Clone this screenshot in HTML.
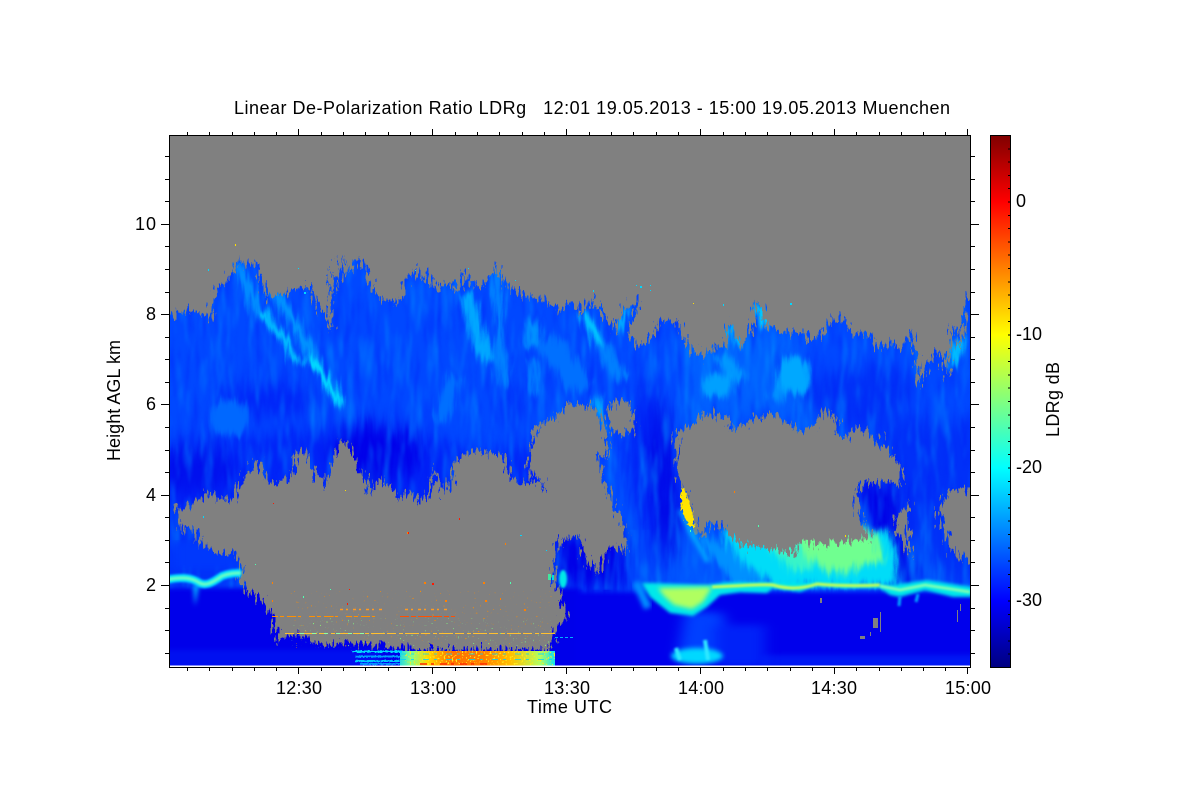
<!DOCTYPE html>
<html><head><meta charset="utf-8"><title>LDRg</title>
<style>
html,body{margin:0;padding:0;background:#fff;width:1200px;height:800px;overflow:hidden}
svg{display:block}
text{font-family:"Liberation Sans",sans-serif;font-size:18px;fill:#000}
</style></head><body>
<svg width="1200" height="800" viewBox="0 0 1200 800" xmlns="http://www.w3.org/2000/svg">
<defs>
<clipPath id="plot"><rect x="170" y="136" width="800" height="530"/></clipPath>
<filter id="tex" filterUnits="userSpaceOnUse" x="100" y="100" width="950" height="620" color-interpolation-filters="sRGB">
  <feGaussianBlur in="SourceGraphic" stdDeviation="9" result="b"/>
  <feTurbulence type="fractalNoise" baseFrequency="0.14 0.02" numOctaves="3" seed="4" result="n"/>
  <feDisplacementMap in="b" in2="n" scale="22" xChannelSelector="R" yChannelSelector="G"/>
</filter>
<filter id="tex2" filterUnits="userSpaceOnUse" x="100" y="100" width="950" height="620" color-interpolation-filters="sRGB">
  <feGaussianBlur in="SourceGraphic" stdDeviation="3" result="b"/>
  <feTurbulence type="fractalNoise" baseFrequency="0.16 0.025" numOctaves="3" seed="8" result="n"/>
  <feDisplacementMap in="b" in2="n" scale="16" xChannelSelector="R" yChannelSelector="G"/>
</filter>
<filter id="tex3" filterUnits="userSpaceOnUse" x="650" y="500" width="300" height="110" color-interpolation-filters="sRGB">
  <feGaussianBlur in="SourceGraphic" stdDeviation="3.5" result="b"/>
  <feTurbulence type="fractalNoise" baseFrequency="0.16 0.03" numOctaves="3" seed="14" result="n"/>
  <feDisplacementMap in="b" in2="n" scale="14" xChannelSelector="R" yChannelSelector="G"/>
</filter>
<filter id="jag" filterUnits="userSpaceOnUse" x="100" y="100" width="950" height="620" color-interpolation-filters="sRGB">
  <feTurbulence type="fractalNoise" baseFrequency="0.38 0.08" numOctaves="3" seed="7" result="n"/>
  <feDisplacementMap in="SourceGraphic" in2="n" scale="24" xChannelSelector="R" yChannelSelector="G"/>
</filter>
<filter id="jag2" filterUnits="userSpaceOnUse" x="600" y="440" width="200" height="140" color-interpolation-filters="sRGB">
  <feTurbulence type="fractalNoise" baseFrequency="0.4 0.2" numOctaves="2" seed="2" result="n"/>
  <feDisplacementMap in="SourceGraphic" in2="n" scale="6" xChannelSelector="R" yChannelSelector="G"/>
</filter>
<filter id="lite" filterUnits="userSpaceOnUse" x="170" y="240" width="800" height="350" color-interpolation-filters="sRGB">
  <feTurbulence type="fractalNoise" baseFrequency="0.13 0.018" numOctaves="3" seed="11"/>
  <feColorMatrix type="matrix" values="0 0 0 0 0  0 0 0 0 0.55  0 0 0 0 1  1.5 0 0 0 -0.72"/>
  <feGaussianBlur stdDeviation="1"/>
</filter>
<filter id="dark" filterUnits="userSpaceOnUse" x="170" y="240" width="800" height="290" color-interpolation-filters="sRGB">
  <feTurbulence type="fractalNoise" baseFrequency="0.16 0.02" numOctaves="3" seed="23"/>
  <feColorMatrix type="matrix" values="0 0 0 0 0  0 0 0 0 0.12  0 0 0 0 0.97  1.3 0 0 0 -0.66"/>
  <feGaussianBlur stdDeviation="1"/>
</filter>
<filter id="sc1" filterUnits="userSpaceOnUse" x="290" y="590" width="262" height="58" color-interpolation-filters="sRGB">
  <feTurbulence type="fractalNoise" baseFrequency="0.55" numOctaves="1" seed="5"/>
  <feColorMatrix type="matrix" values="0 0 0 0 1  0 0 0 0 0.55  0 0 0 0 0  14 0 0 0 -9.95"/>
</filter>
<filter id="sc2" filterUnits="userSpaceOnUse" x="290" y="618" width="262" height="30" color-interpolation-filters="sRGB">
  <feTurbulence type="fractalNoise" baseFrequency="0.6" numOctaves="1" seed="31"/>
  <feColorMatrix type="matrix" values="0 0 0 0 0.5  0 0 0 0 1  0 0 0 0 0.5  14 0 0 0 -9.95"/>
</filter>
<filter id="sc3" filterUnits="userSpaceOnUse" x="405" y="651" width="150" height="14" color-interpolation-filters="sRGB">
  <feTurbulence type="fractalNoise" baseFrequency="0.5 0.6" numOctaves="1" seed="9"/>
  <feColorMatrix type="matrix" values="0 0 0 0 1  0 0 0 0 0.92  0 0 0 0 0.1  10 0 0 0 -5.8"/>
</filter>
<filter id="b1" x="-20%" y="-100%" width="140%" height="300%" color-interpolation-filters="sRGB"><feGaussianBlur stdDeviation="1"/></filter>
<filter id="b15" filterUnits="userSpaceOnUse" x="620" y="560" width="370" height="80" color-interpolation-filters="sRGB"><feGaussianBlur stdDeviation="1.6"/></filter>
<filter id="b2" x="-30%" y="-30%" width="160%" height="160%" color-interpolation-filters="sRGB"><feGaussianBlur stdDeviation="2.5"/></filter>
<filter id="b6" filterUnits="userSpaceOnUse" x="100" y="540" width="950" height="180" color-interpolation-filters="sRGB">
  <feGaussianBlur stdDeviation="7 4"/>
</filter>
<filter id="hotn" filterUnits="userSpaceOnUse" x="340" y="640" width="240" height="30" color-interpolation-filters="sRGB">
  <feTurbulence type="fractalNoise" baseFrequency="0.6 0.5" numOctaves="1" seed="3" result="n"/>
  <feDisplacementMap in="SourceGraphic" in2="n" scale="3" xChannelSelector="R" yChannelSelector="G"/>
</filter>
<linearGradient id="jet" x1="0" y1="0" x2="0" y2="1">
  <stop offset="0" stop-color="#800000"/><stop offset=".125" stop-color="#ff0000"/>
  <stop offset=".375" stop-color="#ffff00"/><stop offset=".5" stop-color="#80ff80"/>
  <stop offset=".625" stop-color="#00ffff"/><stop offset=".875" stop-color="#0000ff"/>
  <stop offset="1" stop-color="#000080"/>
</linearGradient>
<linearGradient id="hot" gradientUnits="userSpaceOnUse" x1="395" y1="0" x2="556" y2="0">
  <stop offset="0" stop-color="#00c8ff"/><stop offset=".1" stop-color="#80ff90"/>
  <stop offset=".2" stop-color="#ffdc00"/><stop offset=".35" stop-color="#ff7000"/>
  <stop offset=".55" stop-color="#ff8000"/><stop offset=".72" stop-color="#ffc000"/>
  <stop offset=".9" stop-color="#b0ff60"/><stop offset="1" stop-color="#00e0ff"/>
</linearGradient>
</defs>

<rect x="170" y="135" width="800" height="532" fill="#0046ff"/>
<g clip-path="url(#plot)">
  <g filter="url(#tex)">
    <rect x="130" y="220" width="880" height="480" fill="#0048ff"/>
    <!-- darker lower cloud -->
    <path d="M150 450 L300 430 L340 425 L420 435 L480 455 L560 440 L560 520 L150 540Z" fill="#0024f8"/>
    <ellipse cx="375" cy="455" rx="45" ry="32" fill="#0000ea"/>
    <ellipse cx="270" cy="400" rx="50" ry="14" fill="#0024f8"/>
    <ellipse cx="195" cy="470" rx="40" ry="25" fill="#0010ee"/>
    <ellipse cx="515" cy="405" rx="10" ry="22" fill="#0030fa"/>
    <rect x="150" y="510" width="130" height="80" fill="#0030f8"/>
    <rect x="555" y="530" width="70" height="60" fill="#0000e8"/>
    <!-- 14:00 column -->
    <path d="M640 590 L625 430 L650 370 L672 430 L680 500 L720 590Z" fill="#0024f6"/>
    <path d="M652 450 L660 395 L672 450 L686 560 L665 560Z" fill="#0000e4"/>
    <path d="M606 470 L630 500 L660 580 L635 585 L620 530Z" fill="#0054ff"/>
    <path d="M680 520 L735 590 L660 590Z" fill="#0058ff"/>
    <!-- right part -->
    <rect x="880" y="420" width="110" height="165" fill="#0030f8"/>
    <path d="M855 485 L895 480 L898 540 L912 585 L880 585Z" fill="#0000e6"/>
    <path d="M905 530 L915 540 L945 585 L925 585Z" fill="#0070ff"/>
    <path d="M800 380 L870 365 L915 375 L912 400 L860 440 L800 400Z" fill="#0030f8"/>
    <rect x="680" y="330" width="120" height="90" fill="#0060ff"/>
  </g>
  <rect x="170" y="240" width="800" height="350" filter="url(#lite)"/>
  <rect x="170" y="240" width="800" height="290" filter="url(#dark)"/>
  <!-- bright streaks on top of texture -->
  <g filter="url(#tex2)" fill="none">
    <path d="M237 263 L263 320" stroke="#0090ff" stroke-width="10"/>
    <path d="M270 290 L300 330 L320 370" stroke="#0098ff" stroke-width="9"/>
    <path d="M262 312 L287 343 L298 365" stroke="#00d0ff" stroke-width="7"/>
    <path d="M307 358 L327 377 L341 405" stroke="#00e8ff" stroke-width="8"/>
    <path d="M466 295 L480 340 L490 362" stroke="#00a8ff" stroke-width="13"/>
    <path d="M497 265 L500 340 L505 385" stroke="#0088ff" stroke-width="8"/>
    <path d="M455 375 L440 420" stroke="#0070ff" stroke-width="13"/>
    <path d="M533 320 L533 345" stroke="#0090ff" stroke-width="14"/>
    <path d="M533 360 L535 395" stroke="#0080ff" stroke-width="8"/>
    <path d="M545 340 L585 390" stroke="#0070ff" stroke-width="24"/>
    <path d="M583 312 L600 345" stroke="#00c8ff" stroke-width="10"/>
    <path d="M600 345 L622 380" stroke="#0080ff" stroke-width="12"/>
    <path d="M626 308 L620 332" stroke="#00c8ff" stroke-width="6"/>
    <path d="M596 398 L603 432" stroke="#00b8ff" stroke-width="7"/>
    <path d="M731 325 L736 346" stroke="#00d0ff" stroke-width="7"/>
    <path d="M757 305 L766 327" stroke="#00e0ff" stroke-width="8"/>
    <path d="M720 355 L740 378" stroke="#0098ff" stroke-width="13"/>
    <path d="M775 400 L790 370" stroke="#0090ff" stroke-width="14"/>
    <path d="M960 338 L952 368" stroke="#00d8ff" stroke-width="7"/>
    <ellipse cx="230" cy="418" rx="20" ry="18" fill="#0068ff"/>
    <ellipse cx="718" cy="385" rx="17" ry="12" fill="#00a0ff"/>
    <ellipse cx="795" cy="375" rx="15" ry="20" fill="#00a8ff"/>
  </g>
  <!-- cyan / green area -->
  <g filter="url(#tex3)">
    <path d="M692 530 L730 545 L772 584 L735 586Z" fill="#0090ff"/>
    <path d="M720 530 L890 530 L900 586 L778 586 L745 565Z" fill="#00dcf8"/>
    <path d="M760 538 L802 538 L815 570 L790 570Z" fill="#38f4c8"/>
    <path d="M796 532 L874 532 L884 560 L835 574 L806 558Z" fill="#70ff90"/>
  </g>
  <!-- boundary layer -->
  <g filter="url(#b2)">
    <rect x="160" y="588" width="420" height="90" fill="#0000ea"/>
    <rect x="575" y="592" width="400" height="90" fill="#0000ec"/>
    <rect x="160" y="650" width="220" height="20" fill="#0010f0"/>
    <rect x="760" y="655" width="215" height="14" fill="#0018f4"/>
    <path d="M193 585 L199 585 L195 606Z" fill="#00b8ff"/>
  </g>
  <g filter="url(#b6)">
    <path d="M685 612 L722 612 L735 655 L678 655Z" fill="#0040ff"/>
    <rect x="715" y="625" width="50" height="42" fill="#0022f8"/>
    <path d="M171 540 L240 545 L240 570 L171 570Z" fill="#0038fc"/>
  </g>
  <!-- gray sky + lobes -->
  <g filter="url(#jag)" fill="#808080">
    <path d="M160 312 L170 315 L190 310 L212 318 L215 290 L232 273 L238 257 L243 267 L255 262 L263 280 L265 297 L283 293 L300 288 L310 288 L317 300 L327 320 L332 330 L332 317 L330 263 L335 293 L342 258 L347 277 L355 257 L363 263 L370 283 L380 300 L390 300 L397 305 L405 287 L413 268 L422 283 L428 270 L433 290 L450 283 L460 292 L463 270 L470 283 L483 288 L497 263 L503 283 L520 293 L543 300 L560 312 L570 303 L583 313 L592 298 L603 313 L615 333 L623 308 L640 300 L627 333 L640 347 L655 333 L658 323 L677 320 L685 340 L700 358 L713 350 L727 343 L730 320 L740 347 L750 333 L757 303 L767 327 L793 333 L803 332 L813 342 L833 320 L843 315 L850 333 L873 337 L880 350 L893 340 L900 350 L912 332 L917 370 L920 390 L927 367 L937 350 L948 377 L953 323 L960 347 L968 297 L985 290 L985 120 L160 120Z"/>
    <path d="M176 508 L190 505 L207 493 L230 502 L240 483 L257 457 L267 480 L277 483 L293 477 L295 450 L308 453 L313 470 L325 487 L333 457 L342 440 L350 447 L357 463 L370 490 L383 477 L400 500 L410 490 L417 500 L430 497 L435 463 L443 497 L453 477 L457 457 L477 450 L503 457 L512 480 L533 483 L545 488 L527 470 L532 447 L535 427 L557 417 L570 402 L580 403 L597 410 L603 427 L608 443 L609 457 L597 457 L603 477 L610 497 L623 523 L627 547 L625 553 L610 545 L597 572 L587 563 L577 533 L567 543 L560 537 L553 567 L557 593 L563 603 L567 617 L558 627 L552 637 L550 650 L417 650 L390 647 L357 643 L323 643 L313 640 L297 633 L278 640 L272 617 L263 600 L247 590 L240 577 L237 553 L213 553 L205 543 L190 528 L183 533 L178 520Z"/>
    <path d="M607 405 L620 400 L632 405 L634 430 L625 435 L610 430Z"/>
    <path d="M676 430 L693 427 L700 413 L727 417 L733 430 L757 417 L777 413 L793 427 L810 430 L827 407 L843 440 L860 427 L877 440 L890 450 L900 467 L903 487 L893 480 L883 483 L860 483 L857 503 L862 523 L870 540 L843 542 L827 545 L800 543 L793 553 L773 550 L737 543 L727 530 L710 520 L703 540 L693 523 L683 490 L677 473Z"/>
    <path d="M895 518 L910 503 L907 530 L913 560 L903 547 L897 530Z"/>
    <path d="M985 485 L953 490 L937 510 L947 537 L957 557 L985 565Z"/>
  </g>
  <!-- boundary layer line left -->
  <path d="M165 580 C180 577 190 577 198 582 C205 587 212 583 222 576 C230 573 236 573 241 573" fill="none" stroke="#00e0ff" stroke-width="8" filter="url(#b1)"/>
  <path d="M165 580 C180 577 190 577 198 582 C205 587 212 583 222 576 C230 573 236 573 241 573" fill="none" stroke="#70ffc0" stroke-width="3" filter="url(#b1)"/>
  <!-- 13:30 plume -->
  <path d="M563 545 L563 600" stroke="#00b0ff" stroke-width="4" filter="url(#b1)"/>
  <ellipse cx="563" cy="579" rx="4" ry="9" fill="#00e8e8" filter="url(#b1)"/>
  <rect x="548" y="574" width="3" height="6" fill="#40e8a0"/>
  <rect x="552" y="575" width="2" height="5" fill="#00e0e0"/>
  <path d="M568 581 H640" stroke="#0070ff" stroke-width="6" stroke-dasharray="14 4 8 6" filter="url(#b1)"/>
  <path d="M636 582 L648 608" stroke="#0090ff" stroke-width="8" filter="url(#b2)"/>
  <!-- main layer -->
  <path d="M642 583 L653 583 L707 585 L727 582 L827 582 L893 585 L927 580 L972 587 L972 597 L953 597 L925 590 L900 597 L890 595 L880 588 L843 588 L817 585 L800 592 L773 588 L767 593 L740 592 L720 595 L707 607 L693 616 L670 613 L650 597Z" fill="#00e8ea" filter="url(#b15)"/>
  <path d="M658 588 L712 587 L703 602 L692 609 L674 605 L664 596Z" fill="#b0ff60" filter="url(#b2)"/>
  <path d="M712 587 C740 586 760 584 773 585 C790 590 805 588 817 584 C840 586 860 586 880 585" fill="none" stroke="#ccff50" stroke-width="3" filter="url(#b1)"/>
  <path d="M880 586 L900 590 L925 585 L970 592" fill="none" stroke="#80ffb0" stroke-width="3" filter="url(#b1)"/>
  <path d="M900 596 L899 606 M918 594 L916 602" stroke="#00a8ff" stroke-width="3" filter="url(#b1)"/>
  <!-- 14:00 bottom blob -->
  <ellipse cx="697" cy="656" rx="26" ry="8" fill="#00d8ff" filter="url(#b2)"/>
  <path d="M676 648 L680 660 M705 640 L708 660" stroke="#30e8ff" stroke-width="4" filter="url(#b1)"/>
  <!-- yellow -->
  <path d="M680 510 L690 530 L708 562" fill="none" stroke="#00c8ff" stroke-width="5" opacity=".75" filter="url(#b2)"/>
  <path d="M681 487 L685 490 L691 508 L695 527 L688 527 L682 512Z" fill="#ffe400" filter="url(#jag2)"/>
  <!-- hot layer -->
  <rect x="400" y="651" width="155" height="14.5" fill="url(#hot)"/>
  <g filter="url(#hotn)">
    <rect x="352" y="650.5" width="50" height="2" fill="#00d8ff"/>
    <rect x="355" y="655.5" width="45" height="2" fill="#00a0ff"/>
    <rect x="355" y="660" width="45" height="2" fill="#00c8ff"/>
    <rect x="360" y="663" width="40" height="2" fill="#0090ff"/>
  </g>
  <rect x="405" y="651" width="150" height="14" filter="url(#sc3)"/>
  <path d="M400 654H556M400 659.5H556" stroke="#00d0ff" stroke-width=".8" stroke-dasharray="6 5 3 9"/>
  <path d="M420 664H490" stroke="#ff2800" stroke-width="1.5" stroke-dasharray="7 4 3 6"/>
  <!-- scatter -->
  <rect x="290" y="590" width="262" height="58" filter="url(#sc1)"/>
  <rect x="290" y="618" width="262" height="30" filter="url(#sc2)"/>
  <!-- horizontal speckle lines -->
  <path d="M272 616.5H380" stroke="#ff9000" stroke-width="1" stroke-dasharray="6 2 4 3 9 2 3 8"/>
  <path d="M400 616.5H455" stroke="#ff5000" stroke-width="1" stroke-dasharray="9 2 5 2 14 1"/>
  <path d="M285 633.5H555" stroke="#ffc030" stroke-width="1" stroke-dasharray="9 3 4 2 14 2"/>
  <path d="M300 633.5H370" stroke="#90ffa0" stroke-width="1" stroke-dasharray="4 8"/>
  <path d="M340 609.5H382M405 609.5H450" stroke="#ff9a20" stroke-width="1.5" stroke-dasharray="3 3 2 5"/>
  <path d="M555 637.5H575" stroke="#00b0ff" stroke-width="1" stroke-dasharray="3 2"/>
  <!-- dots -->
  <g fill="#ff8000">
    <rect x="272" y="582" width="1" height="2"/><rect x="272" y="600" width="1" height="2"/><rect x="407" y="532" width="2" height="2"/><rect x="424" y="582" width="2" height="2"/><rect x="445" y="600" width="2" height="2"/><rect x="483" y="582" width="2" height="2"/><rect x="485" y="600" width="2" height="2"/><rect x="500" y="598" width="1" height="2"/><rect x="524" y="609" width="2" height="2"/><rect x="505" y="543" width="1" height="2"/><rect x="734" y="491" width="1" height="2"/>
  </g>
  <g fill="#ffe000">
    <rect x="235" y="244" width="1" height="2"/><rect x="345" y="490" width="1" height="1"/><rect x="845" y="535" width="1" height="2"/><rect x="693" y="303" width="1" height="1"/>
  </g>
  <g fill="#50ffb0">
    <rect x="303" y="596" width="1" height="2"/><rect x="330" y="589" width="1" height="1"/><rect x="255" y="564" width="1" height="1"/><rect x="510" y="582" width="1" height="2"/><rect x="758" y="525" width="1" height="2"/><rect x="690" y="530" width="1" height="2"/>
  </g>
  <g fill="#ff1800">
    <rect x="408" y="532" width="1" height="2"/><rect x="347" y="603" width="1" height="2"/><rect x="432" y="583" width="2" height="2"/><rect x="349" y="589" width="1" height="1"/><rect x="459" y="518" width="1" height="2"/><rect x="273" y="503" width="1" height="1"/>
  </g>
  <g fill="#00d8ff">
    <rect x="520" y="535" width="2" height="1"/><rect x="546" y="550" width="1" height="1"/><rect x="208" y="269" width="1" height="2"/><rect x="298" y="268" width="1" height="1"/><rect x="304" y="292" width="2" height="2"/><rect x="415" y="270" width="1" height="1"/><rect x="468" y="268" width="1" height="1"/><rect x="515" y="280" width="1" height="1"/><rect x="203" y="516" width="1" height="2"/><rect x="650" y="290" width="1" height="1"/><rect x="640" y="286" width="2" height="2"/><rect x="650" y="285" width="1" height="1"/><rect x="723" y="304" width="1" height="2"/><rect x="790" y="303" width="2" height="2"/><rect x="636" y="285" width="1" height="1"/><rect x="593" y="290" width="1" height="2"/>
  </g>
  <g fill="#808080">
    <rect x="873" y="618" width="5" height="10"/><rect x="870" y="632" width="1" height="4"/><rect x="880" y="612" width="1" height="20"/><rect x="860" y="636" width="5" height="3"/><rect x="820" y="598" width="2" height="5"/><rect x="957" y="610" width="1" height="12"/><rect x="960" y="604" width="1" height="7"/>
  </g>
</g>
<rect x="170" y="665.5" width="800" height="1.5" fill="#fff"/>

<!-- axes -->
<g fill="none" stroke="#000" stroke-width="1" shape-rendering="crispEdges">
  <rect x="169.5" y="135.5" width="801" height="532"/>
  <path d="M187.5 136v-4M209.5 136v-4M232.5 136v-4M254.5 136v-4M276.5 136v-4M298.5 136v-7M321.5 136v-4M343.5 136v-4M365.5 136v-4M388.5 136v-4M410.5 136v-4M432.5 136v-7M455.5 136v-4M477.5 136v-4M499.5 136v-4M522.5 136v-4M544.5 136v-4M566.5 136v-7M589.5 136v-4M611.5 136v-4M633.5 136v-4M656.5 136v-4M678.5 136v-4M700.5 136v-7M723.5 136v-4M745.5 136v-4M767.5 136v-4M790.5 136v-4M812.5 136v-4M834.5 136v-7M856.5 136v-4M879.5 136v-4M901.5 136v-4M923.5 136v-4M945.5 136v-4M967.5 136v-7"/>
  <path d="M187.5 667v4M209.5 667v4M232.5 667v4M254.5 667v4M276.5 667v4M298.5 667v7M321.5 667v4M343.5 667v4M365.5 667v4M388.5 667v4M410.5 667v4M432.5 667v7M455.5 667v4M477.5 667v4M499.5 667v4M522.5 667v4M544.5 667v4M566.5 667v7M589.5 667v4M611.5 667v4M633.5 667v4M656.5 667v4M678.5 667v4M700.5 667v7M723.5 667v4M745.5 667v4M767.5 667v4M790.5 667v4M812.5 667v4M834.5 667v7M856.5 667v4M879.5 667v4M901.5 667v4M923.5 667v4M945.5 667v4M967.5 667v7"/>
  <path d="M169 156.5h-4M169 179.5h-4M169 201.5h-4M169 224.5h-8M169 246.5h-4M169 269.5h-4M169 292.5h-4M169 314.5h-8M169 337.5h-4M169 359.5h-4M169 382.5h-4M169 404.5h-8M169 427.5h-4M169 450.5h-4M169 472.5h-4M169 495.5h-8M169 517.5h-4M169 540.5h-4M169 562.5h-4M169 585.5h-8M169 608.5h-4M169 630.5h-4M169 653.5h-4"/>
  <path d="M971 156.5h4M971 179.5h4M971 201.5h4M971 224.5h8M971 246.5h4M971 269.5h4M971 292.5h4M971 314.5h8M971 337.5h4M971 359.5h4M971 382.5h4M971 404.5h8M971 427.5h4M971 450.5h4M971 472.5h4M971 495.5h8M971 517.5h4M971 540.5h4M971 562.5h4M971 585.5h8M971 608.5h4M971 630.5h4M971 653.5h4"/>
</g>

<!-- colour bar -->
<rect x="990.5" y="135.5" width="20" height="532" fill="url(#jet)" stroke="#000" stroke-width="1" shape-rendering="crispEdges"/>
<path d="M1009 148.3V667" stroke="#000" stroke-width="2" stroke-dasharray="1 12.3" fill="none" shape-rendering="crispEdges"/>

<!-- text -->
<text x="234" y="114" textLength="716" lengthAdjust="spacing" xml:space="preserve">Linear De-Polarization Ratio LDRg   12:01 19.05.2013 - 15:00 19.05.2013 Muenchen</text>
<text x="135" y="230" textLength="21">10</text>
<text x="146" y="320">8</text>
<text x="146" y="410">6</text>
<text x="146" y="501">4</text>
<text x="146" y="591">2</text>
<text x="276" y="694" textLength="46">12:30</text>
<text x="410" y="694" textLength="46">13:00</text>
<text x="544" y="694" textLength="46">13:30</text>
<text x="678" y="694" textLength="46">14:00</text>
<text x="811" y="694" textLength="46">14:30</text>
<text x="945" y="694" textLength="46">15:00</text>
<text x="527" y="713" textLength="85">Time UTC</text>
<text transform="translate(120,461) rotate(-90)" textLength="121">Height AGL km</text>
<text transform="translate(1059,437) rotate(-90)" textLength="75">LDRg dB</text>
<text x="1016" y="207">0</text>
<text x="1016" y="340" textLength="26">-10</text>
<text x="1016" y="473" textLength="26">-20</text>
<text x="1016" y="606" textLength="26">-30</text>
</svg>
</body></html>
